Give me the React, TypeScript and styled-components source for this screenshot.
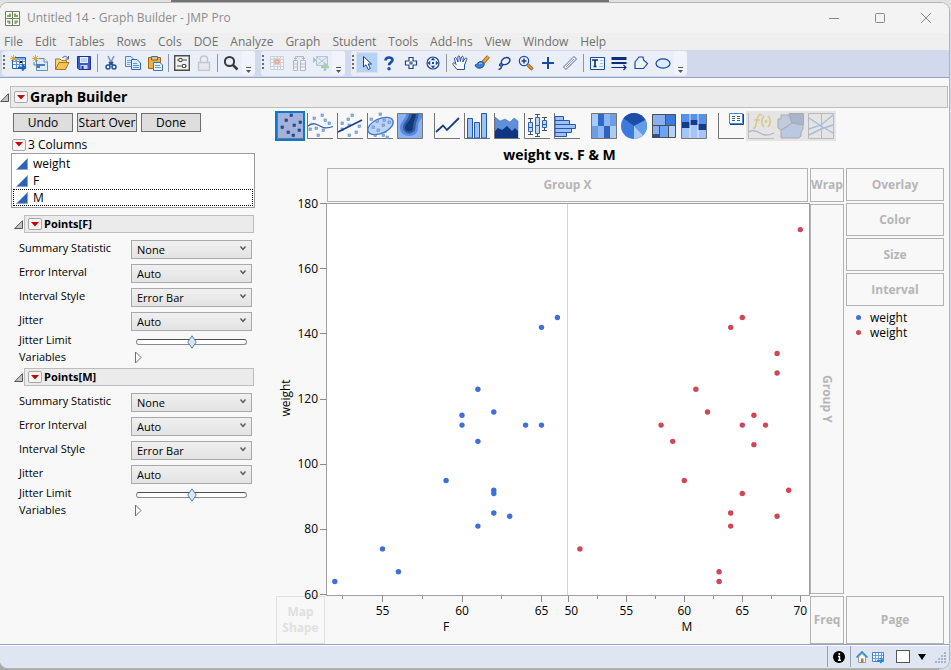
import React, { useId, useState } from "react";
import styled, { createGlobalStyle } from "styled-components";

const GlobalStyle = createGlobalStyle`
  *, *::before, *::after { box-sizing: border-box; }
  html, body { margin: 0; }
  body {
    font-family: "Open Sans", "Noto Sans", sans-serif;
    font-size: 12px;
    line-height: 16px;
    color: #000;
    background: #a9a9a9;
  }
  button, select, input { font: inherit; color: inherit; margin: 0; }
  svg { display: block; overflow: visible; }
`;

/* ---------- Window frame ---------- */

const Desktop = styled.div`
  min-height: 100vh;
  display: flex;
  padding: 3px 2px 3px 0;
  background: linear-gradient(90deg, #e1e1e1 0 171px, #737373 171px 609px, #e1e1e1 609px) top / 100% 12px no-repeat,
    linear-gradient(#d5dbe4, #d5dbe4) right / 12px 100% no-repeat, #a9a9a9;
`;

const AppWindow = styled.div`
  flex: 1;
  min-width: 0;
  display: flex;
  flex-direction: column;
  background: #f8f8f8;
  border-radius: 8px;
  overflow: hidden;
  box-shadow: 0 0 0 1px #b4b4b4;
`;

const TitleBar = styled.header`
  height: 30px;
  display: flex;
  align-items: center;
  padding-left: 5px;
  background: #f3f3f3;
  color: #8c8c8c;
`;

const WindowTitle = styled.h1`
  flex: 1;
  margin: 0 0 0 7px;
  font-size: 12px;
  font-weight: 400;
`;

const CaptionButton = styled.button`
  width: 46px;
  height: 28px;
  display: grid;
  place-items: center;
  padding: 0;
  border: 0;
  background: none;
`;

const MenuBar = styled.nav`
  height: 17px;
  display: flex;
  gap: 12px;
  padding: 0 4px;
  background: #efefef;
`;

const MenuButton = styled.button`
  padding: 0;
  border: 0;
  background: none;
  color: #707070;
  line-height: 17px;
`;

/* ---------- Tool bars ---------- */

const ToolStrip = styled.div`
  height: 28px;
  display: flex;
  padding: 1px 2px;
  background: #d3d9ec;
  border-bottom: 1px solid #93a0c9;
`;

const ToolBand = styled.div<{ $gapAfter?: number }>`
  display: flex;
  align-items: center;
  height: 25px;
  padding-bottom: 2px;
  margin-right: ${(p) => p.$gapAfter ?? 0}px;
  border-radius: 3px;
  background: #e9eef8;
`;

const Grip = styled.span`
  width: 2px;
  height: 15px;
  margin: 0 2px 0 1px;
  background: repeating-linear-gradient(#6b6b6b 0 2px, transparent 2px 4px);
`;

const ToolButton = styled.button<{ $active?: boolean; $faded?: boolean }>`
  width: 22px;
  height: 21px;
  display: grid;
  place-items: center;
  padding: 0;
  border: 1px solid ${(p) => (p.$active ? "#dfe2e8" : "transparent")};
  background: ${(p) => (p.$active ? "#b3d4f7" : "none")};
  opacity: ${(p) => (p.$faded ? 0.4 : 1)};
`;

const ToolDivider = styled.span`
  width: 1px;
  height: 18px;
  margin: 0 2px;
  background: #8d94a8;
`;

const OverflowButton = styled.button`
  width: 13px;
  height: 23px;
  display: flex;
  align-items: flex-end;
  justify-content: center;
  padding: 0 0 1px;
  border: 0;
  border-radius: 0 3px 3px 0;
  background: #f1f4fb;
`;

/* ---------- Outline headings ---------- */

const Content = styled.main`
  flex: 1;
  padding: 8px 1px 0 0;
`;

const OutlineRow = styled.div<{ $nested?: boolean }>`
  display: flex;
  align-items: center;
  gap: 1px;
  padding-left: ${(p) => (p.$nested ? 3 : 0)}px;
`;

const OutlineBar = styled.div<{ $nested?: boolean }>`
  flex: 1;
  display: flex;
  align-items: center;
  gap: 2px;
  height: ${(p) => (p.$nested ? 18 : 22)}px;
  padding-left: 3px;
  background: #ebebeb;
  border: 1px solid #bdbdbd;
`;

const OutlineTitle = styled.h2<{ $nested?: boolean }>`
  margin: 0;
  font-size: ${(p) => (p.$nested ? 11 : 14)}px;
  line-height: 16px;
  font-weight: 700;
`;

const BareButton = styled.button`
  display: grid;
  place-items: center;
  padding: 0;
  border: 0;
  background: none;
`;

const RedButton = styled.button`
  width: 14px;
  height: 12px;
  display: grid;
  place-items: center;
  padding: 0;
  border: 1px solid #a8a8a8;
  border-radius: 2px;
  background: #f6f6f6;
`;

const Body = styled.div`
  display: grid;
  grid-template-columns: 244px minmax(0, 1fr);
  column-gap: 20px;
  padding: 3px 4px 0 11px;
`;

/* ---------- Control panel ---------- */

const ControlPanel = styled.aside`
  display: flex;
  flex-direction: column;
`;

const ActionRow = styled.div`
  display: flex;
  gap: 4px;
  padding: 2px 2px 0;
`;

const ActionButton = styled.button`
  width: 60px;
  height: 19px;
  padding: 0;
  border: 1px solid #6e6e6e;
  background: #dedede;
  line-height: 16px;
  white-space: nowrap;
`;

const ColumnsHeading = styled.div`
  display: flex;
  align-items: center;
  gap: 2px;
  height: 21px;
  padding: 4px 0 0 1px;
`;

const ColumnList = styled.ul`
  margin: 0;
  padding: 1px;
  list-style: none;
  border: 1px solid #9c9c9c;
  background: #fff;
`;

const ColumnItem = styled.li<{ $focused?: boolean }>`
  height: 17px;
  display: flex;
  align-items: center;
  gap: 5px;
  padding-left: 2px;
  border: 1px ${(p) => (p.$focused ? "dotted #000" : "solid transparent")};
`;

const PointsSection = styled.section`
  padding-right: 1px;
  margin-top: 7px;
  & + & { margin-top: 1px; }
`;

const Fields = styled.div`
  display: flex;
  flex-direction: column;
  padding: 6px 2px 0 8px;
`;

const rowHeights = { select: 24, slider: 15, disclosure: 17 };
const rowLines = { select: 18, slider: 10, disclosure: 14 };

const FieldRow = styled.div<{ $kind: "select" | "slider" | "disclosure" }>`
  display: grid;
  grid-template-columns: 112px 1fr;
  height: ${(p) => rowHeights[p.$kind]}px;
  font-size: 11px;
  line-height: ${(p) => rowLines[p.$kind]}px;
`;

const SelectWrap = styled.div`
  display: grid;
  height: 20px;
  align-items: center;
  & > * { grid-area: 1 / 1; }
  & > svg { justify-self: end; margin: 0 6px 2px 0; pointer-events: none; }
`;

const Select = styled.select`
  appearance: none;
  width: 100%;
  height: 19px;
  padding: 0 20px 0 5px;
  border: 1px solid #a9a9a9;
  border-radius: 0;
  background: linear-gradient(#f0f0f0, #e3e3e3);
  line-height: 17px;
`;

const diamond =
  "url(\"data:image/svg+xml,%3Csvg xmlns='http://www.w3.org/2000/svg' width='10' height='14'%3E%3Cpath d='M5 .8L9.2 7L5 13.2L.8 7Z' fill='%23d6e9fa' stroke='%235b7fa3'/%3E%3C/svg%3E\")";

const Slider = styled.input`
  appearance: none;
  width: 111px;
  height: 14px;
  margin: 0 0 0 5px;
  background: none;
  &::-webkit-slider-runnable-track {
    height: 6px;
    border: 1px solid #8a8a8a;
    border-top-color: #4f4f4f;
    border-radius: 3px;
    background: #fff;
  }
  &::-webkit-slider-thumb {
    appearance: none;
    width: 10px;
    height: 14px;
    margin-top: -5px;
    background: ${diamond};
  }
`;

const DisclosureButton = styled(BareButton)`
  align-self: start;
  justify-self: start;
  width: 14px;
`;

/* ---------- Graph area ---------- */

const GraphPanel = styled.section`
  min-width: 0;
`;

const Palette = styled.div`
  display: flex;
`;

const PaletteGroup = styled.div<{ $gapAfter?: number }>`
  display: flex;
  margin-right: ${(p) => p.$gapAfter ?? 0}px;
`;

const PaletteButton = styled.button<{ $selected?: boolean; $faded?: boolean }>`
  width: 30px;
  height: 30px;
  padding: 0;
  border: 2px solid ${(p) => (p.$selected ? "#0a78d4" : "transparent")};
  background: ${(p) => (p.$selected ? "#a3b2d6" : p.$faded ? "#e4e4e4" : "none")};
`;

const GraphTitle = styled.h3`
  height: 27px;
  margin: 0;
  padding-right: 100px;
  text-align: center;
  font-size: 14px;
  line-height: 28px;
  font-weight: 700;
`;

const GraphGrid = styled.div`
  display: grid;
  grid-template-columns: 49px minmax(0, 1fr) 34px 98px;
  grid-template-rows: 34px minmax(390px, auto) 48px;
  gap: 2px;
  padding-left: 1px;
`;

const DropZone = styled.div<{ $area: string; $faint?: boolean; $vertical?: boolean }>`
  grid-area: ${(p) => p.$area};
  display: flex;
  align-items: center;
  justify-content: center;
  text-align: center;
  border: 1px solid ${(p) => (p.$faint ? "#e0e0e0" : "#b3b3b3")};
  color: ${(p) => (p.$faint ? "#e0e0e0" : "#b5b5b5")};
  font-weight: 700;
  writing-mode: ${(p) => (p.$vertical ? "vertical-rl" : "horizontal-tb")};
`;

const SideColumn = styled.div`
  grid-area: 1 / 4 / 3 / 5;
  display: flex;
  flex-direction: column;
  gap: 2px;
`;

const SideZone = styled(DropZone)`
  height: 33px;
`;

const Legend = styled.ul`
  margin: 2px 0 0;
  padding: 0 0 0 10px;
  list-style: none;
  line-height: 15px;
`;

const LegendItem = styled.li<{ $color: string }>`
  display: flex;
  align-items: center;
  gap: 9px;
  height: 15px;
  &::before {
    content: "";
    width: 5px;
    height: 5px;
    border-radius: 50%;
    background: ${(p) => p.$color};
  }
`;

const ChartSvg = styled.svg`
  grid-area: 2 / 1 / 4 / 3;
  width: 100%;
  font-family: inherit;
  font-size: 12px;
`;

/* ---------- Status bar ---------- */

const StatusBar = styled.footer`
  height: 24px;
  display: flex;
  align-items: center;
  justify-content: flex-end;
  border-top: 1px solid #98a0cc;
  background: #dfe6f1;
  box-shadow: inset 0 1px 0 #fff;
`;

const StatusCell = styled.div`
  height: 21px;
  display: flex;
  align-items: center;
  gap: 4px;
  padding: 0 5px;
  border-left: 1px solid #9aa0b4;
  &:last-child { padding-right: 3px; }
`;

const StatusCheck = styled.input`
  appearance: none;
  width: 14px;
  height: 13px;
  margin-left: 8px;
  border: 1px solid #555;
  background: #fff;
`;

/* ---------- Small glyphs ---------- */

const Collapse = ({ label }: { label: string }) => (
  <BareButton aria-label={label}>
    <svg width="9" height="9"><path d="M8.500 .7V8.500H.7Z" fill="#c4c4c4" stroke="#555" /></svg>
  </BareButton>
);

const RedMenu = ({ label }: { label: string }) => (
  <RedButton aria-label={label}>
    <svg width="8" height="5"><path d="M0 0H8L4 4.500Z" fill="#c80000" /></svg>
  </RedButton>
);

const Icon = ({ children, size = 16 }: { children: React.ReactNode; size?: number }) => (
  <svg width={size} height={size} viewBox={`0 0 ${size} ${size}`} fill="none">{children}</svg>
);

const Spark = () => <path d="M3.500 0V7M0 3.500H7M1 1L6 6M6 1L1 6" stroke="#dba93a" />;

const toolIcons: Record<string, React.ReactNode> = {
  newTable: (
    <Icon>
      <path d="M2.500 2.500H15.500V13.500H2.500Z" fill="#fff" stroke="#2460b8" />
      <path d="M3 6.500H15M3 9.500H15M6.500 4V13M9.500 4V13M12.500 4V13" stroke="#5b90da" />
      <path d="M3 3H15V5H3Z" fill="#7badec" />
      <path d="M10 6H12V8H10Z" fill="#111" />
      <path d="M8 12.500H14M12 9.500L15 12.500L12 15.500" stroke="#1767c5" strokeWidth="2" />
      <Spark />
    </Icon>
  ),
  newScript: (
    <Icon>
      <path d="M4.500 3.500H12L15.500 7V15.500H4.500Z" fill="#d9ebfc" stroke="#6a8cb5" />
      <path d="M12 3.500V7H15.500" fill="#fff" stroke="#6a8cb5" />
      <path d="M5 9H13V11H8V13H5Z" fill="#4882b4" />
      <path d="M2 7V10H7" stroke="#567a9d" />
      <Spark />
    </Icon>
  ),
  open: (
    <Icon>
      <path d="M1.500 14V4H6L7.500 5.500H12.500V8" fill="#f7d777" stroke="#ad7c21" />
      <path d="M1.500 14.500L5 7.500H15L11.500 14.500Z" fill="#f5c34f" stroke="#a8771f" />
      <path d="M8.500 3C10 .5 13 1 14 3.500M14.500 1V4H11.500" stroke="#44627e" />
    </Icon>
  ),
  save: (
    <Icon>
      <path d="M1.500 1.500H14.500V14.500H3L1.500 13Z" fill="#3a5bd0" stroke="#1d318f" />
      <path d="M4 2H12V8H4Z" fill="#e8effb" />
      <path d="M5 4H11M5 6H11" stroke="#9cb0d8" />
      <path d="M4.500 10H11.500V14H4.500Z" fill="#c8d1e8" />
      <path d="M5.500 11H7.500V14H5.500Z" fill="#1d318f" />
    </Icon>
  ),
  cut: (
    <Icon>
      <path d="M5 1L9.500 10M11 1L6.500 10" stroke="#7d93ad" strokeWidth="1.500" />
      <path d="M6 7L10 10M10 7L6 10" stroke="#254f9e" strokeWidth="2" />
      <circle cx="5" cy="12" r="2" stroke="#254f9e" strokeWidth="1.500" />
      <circle cx="11" cy="12" r="2" stroke="#254f9e" strokeWidth="1.500" />
    </Icon>
  ),
  copy: (
    <Icon>
      <path d="M.5 1.500H6L8.500 4V11.500H.5Z" fill="#dceafc" stroke="#4c86cf" />
      <path d="M2 5.500H7M2 7.500H7M2 9.500H5" stroke="#7ba7e0" />
      <path d="M6.500 4.500H12L15.500 8V14.500H6.500Z" fill="#dceafc" stroke="#2e68bb" />
      <path d="M8 8.500H12M8 10.500H14M8 12.500H14" stroke="#5b90da" />
    </Icon>
  ),
  paste: (
    <Icon>
      <path d="M1.500 2.500H13.500V13.500H1.500Z" fill="#efb13b" stroke="#9a671d" />
      <path d="M4.500 1.500H10.500V5H4.500Z" fill="#c5c5ba" stroke="#6e6652" />
      <path d="M6.500 7.500H13L15.500 10V15.500H6.500Z" fill="#e4effc" stroke="#3e72b5" />
      <path d="M8 10.500H13M8 12.500H14" stroke="#6f9cd8" />
    </Icon>
  ),
  filter: (
    <Icon>
      <path d="M.7 .7H15.300V15.300H.7Z" fill="#f2f2f2" stroke="#4c4c4c" strokeWidth="1.400" />
      <path d="M3 5H13M3 11H13" stroke="#4c4c4c" />
      <path d="M5 3.500H8V6.500H5ZM8.500 9.500H11.500V12.500H8.500Z" fill="#fff" stroke="#4c4c4c" />
    </Icon>
  ),
  lock: (
    <Icon>
      <path d="M4.500 7V4C4.500 0 11.500 0 11.500 4V7" stroke="#c3c5cb" strokeWidth="1.500" />
      <path d="M2.500 7.500H13.500V15.300H2.500Z" fill="#e6e8ee" stroke="#c3c5cb" strokeWidth="1.300" />
    </Icon>
  ),
  search: (
    <Icon>
      <circle cx="6.500" cy="6.500" r="4.600" stroke="#3a3a3a" strokeWidth="2" />
      <path d="M10 10L14.500 14.500" stroke="#3a3a3a" strokeWidth="2.500" />
    </Icon>
  ),
  dataTable: (
    <Icon>
      <path d="M1.500 1.500H14.500V14.500H1.500Z" fill="#fff" stroke="#97a5bd" />
      <path d="M2 4.500H14M2 7.500H14M2 11.500H14M5 2V14M8.500 2V14M11.500 2V14" stroke="#97a5bd" />
      <path d="M4 3H12V10H4Z" fill="#e39b60" /><path d="M6 5H10V8H6Z" stroke="#c22" />
    </Icon>
  ),
  columns: (
    <Icon>
      <path d="M2.500 5.500H6.500V15.500H2.500ZM9.500 5.500H14.500V15.500H9.500Z" fill="#fff" stroke="#666" />
      <path d="M2.500 9H6.500M2.500 12H6.500M9.500 9H14.500M9.500 12H14.500M4.500 4V1.500H12.500V4M2.500 2.500L4.500 4.500L6.500 2.500M10.500 2.500L12.500 4.500L14.500 2.500" stroke="#666" />
    </Icon>
  ),
  addGraph: (
    <Icon>
      <path d="M3.500 1.500H14.500V10.500H3.500Z" fill="#d6e6f5" stroke="#5d85a8" />
      <path d="M4 2L14 10M14 2L4 10" stroke="#5d85a8" />
      <path d="M0 2L4 5L0 8Z" fill="#479a47" />
      <path d="M12 8V16M8 12H16" stroke="#479a47" strokeWidth="2.500" />
    </Icon>
  ),
  arrow: (
    <Icon>
      <path d="M4.500 1.500V12L7 9.800L9.200 14.500L11.300 13.500L9.200 9H12.500Z" fill="#fff" stroke="#1b3f8f" />
    </Icon>
  ),
  help: (
    <Icon>
      <path d="M4.500 5.500C4.500 1.500 11.500 1.500 11.500 5C11.500 7.500 8 7.300 8 10.300" stroke="#1d4da8" strokeWidth="2.600" />
      <circle cx="8" cy="13.700" r="1.700" fill="#1d4da8" />
    </Icon>
  ),
  cross: (
    <Icon>
      <path d="M6 2.500H10V6H13.500V10H10V13.500H6V10H2.500V6H6Z" fill="#fff" stroke="#1d4392" strokeWidth="1.200" />
      <path d="M8 6V10M6 8H10" stroke="#1d4392" />
    </Icon>
  ),
  globe: (
    <Icon>
      <circle cx="8" cy="8" r="6" fill="#eaf2fc" stroke="#1d4392" strokeWidth="1.200" />
      <path d="M8 2.500L10.200 5.200H5.800ZM8 13.500L10.200 10.800H5.800ZM2.500 8L5.200 5.800V10.200ZM13.500 8L10.800 5.800V10.200ZM7 7H9V9H7Z" fill="#1d4392" />
    </Icon>
  ),
  hand: (
    <Icon>
      <path d="M5 14.500L1 9.500C0 8 2 7.300 3 8.500L4 9.500L2.500 4C2.300 2.500 4 2.200 4.500 3.500L6 7L5.800 2C5.800 .7 7.600 .7 7.800 2L8.300 6.500L9.500 2C9.900 .8 11.500 1.300 11.300 2.500L10.800 7L13 3.500C14 2.500 15.300 3.300 14.700 4.500L12.500 10V14.500Z" fill="#fff" stroke="#28509b" />
    </Icon>
  ),
  brush: (
    <Icon>
      <path d="M14.500 1.500L9 7.500" stroke="#9b5d14" strokeWidth="4" />
      <path d="M14.500 1.500L9 7.500" stroke="#efab36" strokeWidth="2" />
      <path d="M1 10C3 10 4 6 7.500 6.500C11 7 11 11 8 12.500C5 14 2 13 1 10Z" fill="#3e80d5" stroke="#17488f" />
      <path d="M5 9C6 8 7 8 8 8.500" stroke="#bfdcfa" />
    </Icon>
  ),
  lasso: (
    <Icon>
      <path d="M6 9C4 6.500 7 2.500 10.500 2.500C14 2.500 15 5.500 12.500 8C10.500 9.800 7.500 10 6 9C3 8 3 11 5 11C7 11 7 9.500 6 9M5 11C6 13 4.500 14 2.500 14.500" stroke="#17408c" strokeWidth="1.400" />
    </Icon>
  ),
  magnify: (
    <Icon>
      <path d="M10 10L14.500 14.500" stroke="#8f5a18" strokeWidth="3.200" />
      <path d="M10 10L14.500 14.500" stroke="#eda935" strokeWidth="1.200" />
      <circle cx="6" cy="6" r="4.700" fill="#e6f1fd" stroke="#1d4da8" strokeWidth="1.200" />
      <path d="M6 3.500V8.500M3.500 6H8.500" stroke="#17408c" strokeWidth="1.500" />
    </Icon>
  ),
  plus: <Icon><path d="M8 2V14M2 8H14" stroke="#1649a0" strokeWidth="2" /></Icon>,
  line: (
    <Icon><path d="M1.500 12L12 1.500L14.500 4L4 14.500Z" fill="#f3f7fd" stroke="#4a67a2" /><path d="M4 12L12 4" stroke="#8ba1cb" /></Icon>
  ),
  textBox: (
    <Icon>
      <path d="M1.500 2.500H15.500V14.500H1.500Z" fill="#eef5fd" stroke="#1649a0" />
      <path d="M3 5H9M6 5V11M4.500 11.500H7.500" stroke="#0c2f7c" strokeWidth="1.600" />
      <path d="M11 5.500H14M11 8.500H14M10 11.500H14" stroke="#9bbcea" />
    </Icon>
  ),
  lines: (
    <Icon>
      <path d="M.5 3.500H15.500" stroke="#0c2f7c" strokeWidth="3" />
      <path d="M.5 8H15.500" stroke="#0c2f7c" strokeWidth="2" />
      <path d="M.5 12.500H15M12.500 10L15 12.500L12.500 15" stroke="#0c2f7c" strokeWidth="1.200" />
    </Icon>
  ),
  polygon: <Icon><path d="M2 7L6 2H10L10.500 5L14.500 8.500L10.500 13.500H2Z" fill="#edf5fe" stroke="#1649a0" strokeWidth="1.200" /></Icon>,
  ellipse: <Icon><ellipse cx="8" cy="8.500" rx="7" ry="4.700" fill="#dcebfb" stroke="#1649a0" strokeWidth="1.200" /></Icon>,
};

type Tool = { icon: string; label: string; faded?: boolean; active?: boolean } | null;

const toolBands: { gapAfter?: number; tools: Tool[] }[] = [
  {
    gapAfter: 6,
    tools: [
      { icon: "newTable", label: "New Data Table" }, { icon: "newScript", label: "New Script" },
      { icon: "open", label: "Open" }, { icon: "save", label: "Save" }, null,
      { icon: "cut", label: "Cut" }, { icon: "copy", label: "Copy" }, { icon: "paste", label: "Paste" }, null,
      { icon: "filter", label: "Data Filter" }, { icon: "lock", label: "Lock" }, null,
      { icon: "search", label: "Search" },
    ],
  },
  {
    gapAfter: 6,
    tools: [
      { icon: "dataTable", label: "Data Table", faded: true }, { icon: "columns", label: "Columns", faded: true },
      { icon: "addGraph", label: "Add Graph", faded: true },
    ],
  },
  {
    tools: [
      { icon: "arrow", label: "Arrow", active: true }, { icon: "help", label: "Help Tool" },
      { icon: "cross", label: "Selection" }, { icon: "globe", label: "Scroller" }, null,
      { icon: "hand", label: "Grabber" }, { icon: "brush", label: "Brush" }, { icon: "lasso", label: "Lasso" },
      { icon: "magnify", label: "Magnifier" }, { icon: "plus", label: "Crosshairs" }, { icon: "line", label: "Line" }, null,
      { icon: "textBox", label: "Annotate" }, { icon: "lines", label: "Lines" },
      { icon: "polygon", label: "Polygon" }, { icon: "ellipse", label: "Simple Shape" },
    ],
  },
];

/* ---------- Graph element icons ---------- */

const Axes = () => <path d="M.5 0V25.500H26" stroke="#747474" fill="none" />;

const Dots = ({ at, strong }: { at: number[][]; strong?: boolean }) => (
  <>
    {at.map(([x, y]) => (
      <rect key={`${x}-${y}`} x={x - 1} y={y - 1} width="2.500" height="2.500"
        fill={strong ? "#1f50ae" : "#8fb5ea"} stroke={strong ? "#17418f" : "#5f8cc8"} strokeWidth="0.600" />
    ))}
  </>
);

const elementIcons: Record<string, React.ReactNode> = {
  Points: <><Axes /><Dots strong at={[[14, 2], [9, 7], [23, 9], [17, 12], [5, 14], [22, 17], [11, 19], [16, 22]]} /></>,
  Smoother: (
    <><Axes /><Dots at={[[15, 2], [7, 5], [18, 7], [22, 10], [3, 16], [9, 15], [16, 17], [11, 22]]} />
      <path d="M1 13C6 9 10 11 14 13.500C18 16 22 15 26 13.500" stroke="#335fae" strokeWidth="1.300" /></>
  ),
  "Line Of Fit": (
    <><Axes /><Dots at={[[15, 2], [11, 6], [5, 10], [12, 12], [22, 13], [19, 19], [12, 22], [5, 16]]} />
      <path d="M1 19L25 7" stroke="#173d8b" strokeWidth="1.800" /></>
  ),
  Ellipse: (
    <><Axes /><Dots at={[[4, 6], [13, 1], [18, 18], [8, 22], [16, 22], [20, 24]]} />
      <ellipse cx="13.500" cy="13" rx="13.500" ry="7.300" transform="rotate(-24 13.500 13)" fill="#bed3f6" stroke="#4478cf" strokeWidth="1.400" />
      <Dots at={[[10, 8], [17, 7], [22, 9], [6, 14], [16, 12], [11, 17]]} /></>
  ),
  Contour: (
    <><path d="M.5 .5H25.500V25.500H.5Z" fill="#8bb3f2" />
      <path d="M9 1C9 6 3 9 3 14.500C3 20 7 23 12 23C17 23 21 20 21 15C21 12 21 9 25 5V1Z" fill="#5b8add" />
      <path d="M12 1C12 6 6 9 6 14.500C6 18 9 20.500 12 20.500C16 20.500 18.500 18 18.500 14.500C18.500 9 21 6 22 1Z" fill="#2e5cae" />
      <path d="M15 1C15 7 8 10 8 15C8 17 10 18.500 12 18.500C15 18.500 16 17 16 14C16 9 18.500 6 19 1Z" fill="#163871" />
      <path d="M.5 .5H25.500V25.500H.5Z" stroke="#777" /></>
  ),
  Line: <><Axes /><path d="M2 19L9 12.500L13 17L25 5" stroke="#173d8b" strokeWidth="1.800" /></>,
  Bar: (
    <><Axes /><path d="M3.500 5.500H8.500V25H3.500ZM10.500 9.500H15.500V25H10.500ZM17.500 .5H22.500V25H17.500Z" fill="#9dc2fa" stroke="#2457b0" /></>
  ),
  Area: (
    <><path d="M1 4L6 8L11 6L16 9L20 5L24 8V25H1Z" fill="#6090d8" stroke="#3c6db7" strokeWidth="0.500" />
      <path d="M1 18L4 15L8 17L13 13L18 18L21 15L24 18V25H1Z" fill="#0f3683" /><Axes /></>
  ),
  "Box Plot": (
    <><Axes /><path d="M4 5.500H9M6.500 5V9M6.500 18V21M4 21.500H9M11 1.500H16M13.500 1.500V4M13.500 20V23M11 23.500H16M18 4.500H23M20.500 4V7M20.500 14V18M18 17.500H23" stroke="#4a4f5c" />
      <path d="M4.500 9.500H8.500V18.500H4.500ZM11.500 4.500H15.500V20.500H11.500ZM18.500 7.500H22.500V14.500H18.500Z" fill="#b9d6fd" stroke="#2f63bb" />
      <path d="M5 14.500H8M12 12.500H15M19 11.500H22" stroke="#2457b0" /></>
  ),
  Histogram: (
    <><Axes /><path d="M1 3.500H9.500V7.500H1ZM1 7.500H15.500V11.500H1ZM1 11.500H21.500V15.500H1ZM1 15.500H17.500V19.500H1ZM1 19.500H12.500V23.500H1Z" fill="#9dc2fa" stroke="#2457b0" /></>
  ),
  Heatmap: (
    <><path d="M0 0H26V26H0Z" fill="#a9cbfa" /><path d="M7 1H13V13H7Z" fill="#2d69c8" /><path d="M13 1H19V13H13Z" fill="#8db6f2" />
      <path d="M19 1H25V13H19ZM1 13H7V25H1Z" fill="#6f9ce2" /><path d="M7 13H13V25H7Z" fill="#8db6f2" /><path d="M13 13H19V25H13Z" fill="#2f63bb" />
      <path d="M.5 .5H25.500V25.500H.5Z" stroke="#777" /></>
  ),
  Pie: (
    <><circle cx="13" cy="13" r="13" fill="#3c7ade" /><path d="M13 13L2.500 5.300A13 13 0 0 1 24.500 7Z" fill="#1d4da8" />
      <path d="M13 13L24.500 7A13 13 0 0 1 22 22.300Z" fill="#5f9de9" /><path d="M13 13L22 22.300A13 13 0 0 1 13 26Z" fill="#a9cbfa" /></>
  ),
  Treemap: (
    <><path d="M1 1H25V25H1Z" fill="#8ab1ef" /><path d="M14 1H25V12H14Z" fill="#3b7adf" /><path d="M8 13H17V25H8Z" fill="#6ea3fa" />
      <path d="M17 13H25V25H17Z" fill="#b3d1fb" /><path d="M1 21H8V25H1Z" fill="#1f50ae" />
      <path d="M1.500 1.500H24.500V24.500H1.500ZM14.500 1V13M1 12.500H25M8.500 13V25M17.500 13V25M1 21.500H8" stroke="#4f4f4f" /></>
  ),
  Mosaic: (
    <><path d="M1 1H25V25H1Z" fill="#a3c5fb" /><path d="M1 1H9V9H1ZM9 1H17V7H9ZM17 1H25V11H17Z" fill="#5791ec" />
      <path d="M1 9H9V15H1ZM9 7H17V12H9ZM17 11H25V17H17Z" fill="#123b8c" /><path d="M9 1V25M17 1V25" stroke="#e3eeff" />
      <path d="M.5 1V25.500H25.500V1" stroke="#777" /></>
  ),
  "Caption Box": (
    <><Axes /><path d="M11.500 .5H24.500V10.500H11.500Z" fill="#fff" stroke="#4f83d8" /><path d="M25.500 1V11.500H12" stroke="#17418f" />
      <path d="M14 3.500H17M19 3.500H22M14 5.500H17M19 5.500H22M14 7.500H17M19 7.500H22" stroke="#2f5fae" /></>
  ),
  Formula: (
    <><path d="M.5 0V25.500H26" stroke="#bcbcbc" /><path d="M1 19C5 16 9 18 13 20.500C17 23 22 22 26 20" stroke="#a4b4d3" strokeWidth="1.300" />
      <path d="M5 15C8 16 8 11 9 7C10 2 11 1 14 2M6 7H12M16 3C13 6 13 11 16 14M20 3C23 6 23 11 20 14" stroke="#dec884" strokeWidth="1.700" /><circle cx="18" cy="8.500" r="1.400" fill="#dec884" /></>
  ),
  "Map Shapes": (
    <><path d="M3 2H11L14 10L10 13L3 17L0 15V6H3Z" fill="#c0cbe0" stroke="#ababab" /><path d="M11 .5H25.500V12L14 10Z" fill="#a9b5cc" stroke="#ababab" />
      <path d="M3 17L10 13L14 10L25 12V16L23 19V23L21 25H3Z" fill="#bac8e2" stroke="#ababab" /></>
  ),
  Parallel: (
    <><path d="M1 5L13 13L25 20M1 16L13 12L25 2M1 22L13 16L25 12" stroke="#a9bbdb" strokeWidth="1.400" /><path d="M.5 .5H25.500V25.500H.5ZM13.500 0V26" stroke="#b9b9b9" /></>
  ),
};

const paletteGroups = [
  { gapAfter: 7, names: ["Points", "Smoother", "Line Of Fit", "Ellipse", "Contour"] },
  { gapAfter: 7, names: ["Line", "Bar", "Area", "Box Plot", "Histogram"] },
  { gapAfter: 7, names: ["Heatmap", "Pie", "Treemap", "Mosaic"] },
  { names: ["Caption Box", "Formula", "Map Shapes", "Parallel"] },
];

const unavailable = ["Formula", "Map Shapes", "Parallel"];

/* ---------- Chart ---------- */

const BLUE = "#3f6fd9";
const RED = "#cf4657";

const femalePoints = [
  [52, 64], [55, 74], [56, 67], [59, 95], [60, 115], [60, 112], [61, 123], [61, 107], [61, 81],
  [62, 116], [62, 92], [62, 91], [62, 85], [63, 84], [64, 112], [65, 112], [65, 142], [66, 145],
];
const malePoints = [
  [51, 74], [58, 112], [59, 107], [60, 95], [61, 123], [62, 116], [63, 67], [63, 64], [64, 142],
  [64, 85], [64, 81], [65, 145], [65, 112], [65, 91], [66, 115], [66, 106], [67, 112], [68, 134],
  [68, 128], [68, 84], [69, 92], [70, 172],
];

const xFemale = (v: number) => 106.5 + (v - 55) * 15.9;
const xMale = (v: number) => 350.3 + (v - 55) * 11.6;
const yWeight = (v: number) => 390.5 - (v - 60) * 3.258;
const crisp = (n: number) => Math.floor(n) + 0.5;

const XTick = ({ x, v, shift = 0 }: { x: number; v: number; shift?: number }) => (
  <g>
    <line x1={crisp(x)} x2={crisp(x)} y1="392" y2={v % 5 ? 395 : 398} stroke="#8a8a8a" />
    {v % 5 === 0 && <text x={x + shift} y="411" textAnchor="middle">{v}</text>}
  </g>
);

const Chart = () => (
  <ChartSvg viewBox="0 0 532 440" role="img" aria-label="Scatter plot of weight vs. F and M">
    <rect x="50.500" y="-0.500" width="483" height="392" fill="#fff" stroke="#a0a0a0" />
    <line x1="291.500" x2="291.500" y1="0" y2="391" stroke="#d4d4d4" />
    {[60, 80, 100, 120, 140, 160, 180].map((v) => (
      <g key={v}>
        <line x1="44" x2="50" y1={crisp(yWeight(v))} y2={crisp(yWeight(v))} stroke="#8a8a8a" />
        <text x="42" y={Math.round(yWeight(v)) + 4} textAnchor="end">{v}</text>
      </g>
    ))}
    {[52.5, 55, 57.5, 60, 62.5, 65].map((v) => <XTick key={v} v={v} x={xFemale(v)} />)}
    {[50, 52.5, 55, 57.5, 60, 62.5, 65, 67.5, 70].map((v) => <XTick key={v} v={v} x={xMale(v)} shift={v === 50 ? 3 : 0} />)}
    <text x="170" y="427" textAnchor="middle">F</text>
    <text x="411" y="427" textAnchor="middle">M</text>
    <text transform="translate(14 194) rotate(-90)" textAnchor="middle">weight</text>
    {femalePoints.map(([x, y]) => <circle key={`f${x}-${y}`} cx={xFemale(x)} cy={yWeight(y)} r="2.700" fill={BLUE} />)}
    {malePoints.map(([x, y]) => <circle key={`m${x}-${y}`} cx={xMale(x)} cy={yWeight(y)} r="2.700" fill={RED} />)}
  </ChartSvg>
);

/* ---------- Panels ---------- */

const choices: [string, string[]][] = [
  ["Summary Statistic", ["None", "Mean", "Median"]],
  ["Error Interval", ["Auto", "None", "Range"]],
  ["Interval Style", ["Error Bar", "Band"]],
  ["Jitter", ["Auto", "None"]],
];

const PointsOptions = ({ name }: { name: string }) => {
  const id = useId();
  const [limit, setLimit] = useState(51);
  return (
    <PointsSection>
      <OutlineRow $nested>
        <Collapse label={`Collapse ${name}`} />
        <OutlineBar $nested>
          <RedMenu label={`${name} options`} />
          <OutlineTitle as="h3" $nested>{name}</OutlineTitle>
        </OutlineBar>
      </OutlineRow>
      <Fields>
        {choices.map(([label, options]) => (
          <FieldRow key={label} $kind="select">
            <label htmlFor={id + label}>{label}</label>
            <SelectWrap>
              <Select id={id + label}>{options.map((o) => <option key={o}>{o}</option>)}</Select>
              <svg width="6" height="5"><path d="M.5 .5L3 3.500L5.500 .5" fill="none" stroke="#555" strokeWidth="1.300" /></svg>
            </SelectWrap>
          </FieldRow>
        ))}
        <FieldRow $kind="slider">
          <label htmlFor={id + "limit"}>Jitter Limit</label>
          <Slider id={id + "limit"} type="range" value={limit} onChange={(e) => setLimit(Number(e.target.value))} />
        </FieldRow>
        <FieldRow $kind="disclosure">
          <span>Variables</span>
          <DisclosureButton aria-label="Show variables">
            <svg width="8" height="14"><path d="M1.500 2L7 7.500L1.500 13Z" fill="#fff" stroke="#6e6e6e" /></svg>
          </DisclosureButton>
        </FieldRow>
      </Fields>
    </PointsSection>
  );
};

const menus = ["File", "Edit", "Tables", "Rows", "Cols", "DOE", "Analyze", "Graph", "Student", "Tools", "Add-Ins", "View", "Window", "Help"];

export default function App() {
  const [element, setElement] = useState("Points");
  return (
    <>
      <GlobalStyle />
      <Desktop>
        <AppWindow>
          <TitleBar>
            <svg width="15" height="15" fill="none">
              <path d="M.5 .5H14.500V14.500H.5Z" fill="#fff" stroke="#777" />
              <path d="M7.500 0V15M0 7.500H15" stroke="#777" />
              <path d="M2 5H5V2.500M10 2.500V5H13M2 10.500H4.500V13M13 10.500H10.500V13" stroke="#76b043" strokeWidth="2" />
            </svg>
            <WindowTitle>Untitled 14 - Graph Builder - JMP Pro</WindowTitle>
            <CaptionButton aria-label="Minimize"><svg width="10" height="10"><path d="M0 5.500H10" stroke="#888" /></svg></CaptionButton>
            <CaptionButton aria-label="Maximize"><svg width="10" height="10"><rect x=".5" y=".5" width="9" height="9" rx="1" fill="none" stroke="#888" /></svg></CaptionButton>
            <CaptionButton aria-label="Close"><svg width="10" height="10"><path d="M0 0L10 10M10 0L0 10" stroke="#888" /></svg></CaptionButton>
          </TitleBar>
          <MenuBar>{menus.map((m) => <MenuButton key={m}>{m}</MenuButton>)}</MenuBar>
          <ToolStrip>
            {toolBands.map((band, b) => (
              <ToolBand key={b} $gapAfter={band.gapAfter}>
                <Grip />
                {band.tools.map((t, i) =>
                  t ? (
                    <ToolButton key={i} aria-label={t.label} $active={t.active} $faded={t.faded}>{toolIcons[t.icon]}</ToolButton>
                  ) : (
                    <ToolDivider key={i} />
                  )
                )}
                <OverflowButton aria-label="More tools">
                  <svg width="5" height="6"><path d="M0 .5H5" stroke="#555" /><path d="M0 3H5L2.500 6Z" fill="#555" /></svg>
                </OverflowButton>
              </ToolBand>
            ))}
          </ToolStrip>
          <Content>
            <OutlineRow>
              <Collapse label="Collapse Graph Builder" />
              <OutlineBar>
                <RedMenu label="Graph Builder options" />
                <OutlineTitle>Graph Builder</OutlineTitle>
              </OutlineBar>
            </OutlineRow>
            <Body>
              <ControlPanel>
                <ActionRow>
                  <ActionButton>Undo</ActionButton>
                  <ActionButton>Start Over</ActionButton>
                  <ActionButton>Done</ActionButton>
                </ActionRow>
                <ColumnsHeading><RedMenu label="Column options" />3 Columns</ColumnsHeading>
                <ColumnList role="listbox" aria-label="Columns">
                  {["weight", "F", "M"].map((c) => (
                    <ColumnItem key={c} role="option" aria-selected={false} $focused={c === "M"}>
                      <svg width="12" height="12"><path d="M11.500 .5V11.500H.5Z" fill="#2d62b4" stroke="#88a4cc" /></svg>
                      {c}
                    </ColumnItem>
                  ))}
                </ColumnList>
                <PointsOptions name="Points[F]" />
                <PointsOptions name="Points[M]" />
              </ControlPanel>
              <GraphPanel>
                <Palette>
                  {paletteGroups.map((g, i) => (
                    <PaletteGroup key={i} $gapAfter={g.gapAfter}>
                      {g.names.map((n) => (
                        <PaletteButton key={n} aria-label={n} aria-pressed={element === n} disabled={unavailable.includes(n)}
                          $selected={element === n} $faded={unavailable.includes(n)} onClick={() => setElement(n)}>
                          <Icon size={26}>{elementIcons[n]}</Icon>
                        </PaletteButton>
                      ))}
                    </PaletteGroup>
                  ))}
                </Palette>
                <GraphTitle>weight vs. F &amp; M</GraphTitle>
                <GraphGrid>
                  <DropZone $area="1 / 2">Group X</DropZone>
                  <DropZone $area="1 / 3">Wrap</DropZone>
                  <DropZone $area="3 / 1" $faint>Map Shape</DropZone>
                  <Chart />
                  <DropZone $area="2 / 3" $vertical>Group Y</DropZone>
                  <DropZone $area="3 / 3">Freq</DropZone>
                  <SideColumn>
                    {["Overlay", "Color", "Size", "Interval"].map((z) => <SideZone key={z} $area="auto">{z}</SideZone>)}
                    <Legend>
                      <LegendItem $color={BLUE}>weight</LegendItem>
                      <LegendItem $color={RED}>weight</LegendItem>
                    </Legend>
                  </SideColumn>
                  <DropZone $area="3 / 4">Page</DropZone>
                </GraphGrid>
              </GraphPanel>
            </Body>
          </Content>
          <StatusBar>
            <StatusCell>
              <BareButton aria-label="Information">
                <svg width="12" height="12"><circle cx="6" cy="6" r="6" fill="#000" /><path d="M5 5.500H6.500V9M5 9.300H8" stroke="#fff" strokeWidth="1.400" fill="none" /><circle cx="6.300" cy="3" r="1" fill="#fff" /></svg>
              </BareButton>
            </StatusCell>
            <StatusCell>
              <BareButton aria-label="Home">
                <svg width="12" height="12"><path d="M2.500 6V11.500H9.500V6L6 2.500Z" fill="#fff" stroke="#8b9bb0" /><path d="M5 7.500H7.500V11.500H5Z" fill="#b07a2c" /><path d="M.5 6.500L6 1L11.500 6.500" fill="none" stroke="#2a8fc7" strokeWidth="1.600" /></svg>
              </BareButton>
              <BareButton aria-label="Data table">
                <svg width="12" height="12" fill="none"><path d="M.5 1.500H11.500V10.500H.5Z" fill="#fff" stroke="#4d84c5" /><path d="M1 4.500H11M1 7.500H11M3.500 2V10M6.500 2V10M9.500 2V10" stroke="#6f9dd6" /><path d="M5 9.500H10M8 7L11 9.500L8 12" stroke="#1f8bd0" strokeWidth="1.400" /></svg>
              </BareButton>
              <StatusCheck type="checkbox" aria-label="Select window" />
              <BareButton aria-label="Window list">
                <svg width="16" height="6"><path d="M4 0H12L8 6Z" fill="#000" /></svg>
              </BareButton>
              <svg width="12" height="12" fill="#a9b3c6"><path d="M10 1h2v2h-2zM7 4h2v2h-2zM10 4h2v2h-2zM4 7h2v2h-2zM7 7h2v2h-2zM10 7h2v2h-2zM1 10h2v2h-2zM4 10h2v2h-2zM7 10h2v2h-2zM10 10h2v2h-2z" /></svg>
            </StatusCell>
          </StatusBar>
        </AppWindow>
      </Desktop>
    </>
  );
}
